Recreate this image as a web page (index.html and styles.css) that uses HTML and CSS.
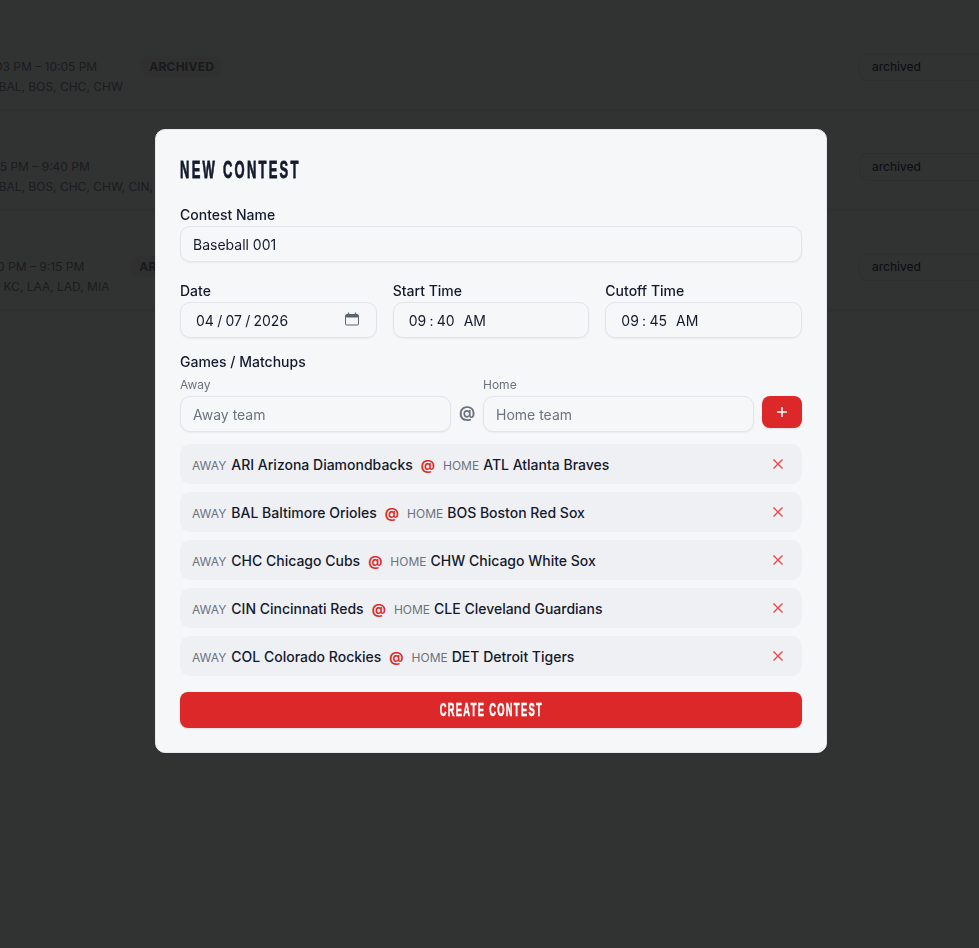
FILE: index.html
```html
<!DOCTYPE html>
<html lang="en">
<head>
<meta charset="utf-8">
<title>New Contest</title>
<link rel="stylesheet" href="styles.css">
</head>
<body>
<main class="page">
  <section class="row">
    <div class="row-info">
      <div class="row-top"><span class="time">10:03 PM – 10:05 PM</span><span class="badge">ARCHIVED</span></div>
      <div class="teams">ATL, BAL, BOS, CHC, CHW</div>
    </div>
    <div class="status">archived</div>
  </section>
  <section class="row">
    <div class="row-info">
      <div class="row-top row-top-wide"><span class="time">10:15 PM – 9:40 PM</span><span class="badge">ARCHIVED</span></div>
      <div class="teams">ATL, BAL, BOS, CHC, CHW, CIN, CLE, COL</div>
    </div>
    <div class="status">archived</div>
  </section>
  <section class="row">
    <div class="row-info">
      <div class="row-top row-top-mid"><span class="time">11:10 PM – 9:15 PM</span><span class="badge">ARCHIVED</span></div>
      <div class="teams">HOU, KC, LAA, LAD, MIA</div>
    </div>
    <div class="status">archived</div>
  </section>
</main>

<div class="backdrop">
  <form class="modal">
    <h2 class="modal-title"><span class="squeeze">NEW CONTEST</span></h2>

    <label class="field">
      <span class="label">Contest Name</span>
      <input class="input" type="text" value="Baseball 001">
    </label>

    <div class="time-grid">
      <label class="field">
        <span class="label">Date</span>
        <span class="date-wrap">
          <input class="input input-dt" type="date" value="2026-04-07">
          <svg class="cal" width="14" height="14" viewBox="0 0 14 14"><path d="M1.5 2.5h11a1 1 0 0 1 1 1v8.500a1 1 0 0 1-1 1h-11a1 1 0 0 1-1-1v-8.500a1 1 0 0 1 1-1z" fill="none" stroke="#5b6270" stroke-width="1"/><path d="M1 2.500h12v3h-12z" fill="#5b6270"/><path d="M3.500 0.500v2M10.500 0.500v2" stroke="#5b6270" stroke-width="1.200"/></svg>
        </span>
      </label>
      <label class="field">
        <span class="label">Start Time</span>
        <input class="input input-dt" type="time" value="09:40">
      </label>
      <label class="field">
        <span class="label">Cutoff Time</span>
        <input class="input input-dt" type="time" value="09:45">
      </label>
    </div>

    <div class="games">
      <div class="label">Games / Matchups</div>
      <div class="add-row">
        <label class="team-field">
          <span class="sublabel">Away</span>
          <input class="input" type="text" placeholder="Away team">
        </label>
        <span class="at-gray">@</span>
        <label class="team-field">
          <span class="sublabel">Home</span>
          <input class="input" type="text" placeholder="Home team">
        </label>
        <button class="add-btn" type="button" aria-label="Add game">
          <svg width="12" height="12" viewBox="0 0 12 12"><path d="M6 1v10M1 6h10" stroke="#fff" stroke-width="1.5" fill="none"/></svg>
        </button>
      </div>
    </div>

    <ul class="game-list">
      <li class="game">
        <span class="tag">AWAY</span><span class="team">ARI Arizona Diamondbacks</span><span class="at">@</span><span class="tag">HOME</span><span class="team">ATL Atlanta Braves</span>
        <svg class="remove" width="12" height="12" viewBox="0 0 12 12"><path d="M1.5 1.5l9 9M10.500 1.500l-9 9"/></svg>
      </li>
      <li class="game">
        <span class="tag">AWAY</span><span class="team">BAL Baltimore Orioles</span><span class="at">@</span><span class="tag">HOME</span><span class="team">BOS Boston Red Sox</span>
        <svg class="remove" width="12" height="12" viewBox="0 0 12 12"><path d="M1.5 1.5l9 9M10.500 1.500l-9 9"/></svg>
      </li>
      <li class="game">
        <span class="tag">AWAY</span><span class="team">CHC Chicago Cubs</span><span class="at">@</span><span class="tag">HOME</span><span class="team">CHW Chicago White Sox</span>
        <svg class="remove" width="12" height="12" viewBox="0 0 12 12"><path d="M1.5 1.5l9 9M10.500 1.500l-9 9"/></svg>
      </li>
      <li class="game">
        <span class="tag">AWAY</span><span class="team">CIN Cincinnati Reds</span><span class="at">@</span><span class="tag">HOME</span><span class="team">CLE Cleveland Guardians</span>
        <svg class="remove" width="12" height="12" viewBox="0 0 12 12"><path d="M1.5 1.5l9 9M10.500 1.500l-9 9"/></svg>
      </li>
      <li class="game">
        <span class="tag">AWAY</span><span class="team">COL Colorado Rockies</span><span class="at">@</span><span class="tag">HOME</span><span class="team">DET Detroit Tigers</span>
        <svg class="remove" width="12" height="12" viewBox="0 0 12 12"><path d="M1.5 1.5l9 9M10.500 1.500l-9 9"/></svg>
      </li>
    </ul>

    <button class="submit" type="button"><span class="squeeze squeeze-btn">CREATE CONTEST</span></button>
  </form>
</div>
</body>
</html>
```

FILE: styles.css
```css
* { box-sizing: border-box; }

html, body {
  margin: 0;
  height: 100%;
  overflow: hidden;
}

body {
  background: #f6f7f9;
  color: #141a2e;
  font-family: Inter, "Liberation Sans", sans-serif;
}

.page {
  width: 1100px;
  margin-left: -30px;
  padding-top: 10px;
}

.row {
  display: flex;
  justify-content: space-between;
  height: 100px;
  padding-top: 46px;
  border-bottom: 1px solid #e8eaee;
  box-shadow: 0 1px 2px rgba(0, 0, 0, 0.03);
  font-size: 12px;
}

.row-info { min-width: 0; }

.row-top {
  display: flex;
  align-items: center;
  gap: 43px;
  height: 20px;
  padding-left: 9px;
}

.row-top-mid { gap: 46px; }

.row-top-wide { gap: 80px; }

.time { color: #8a8f99; }

.badge {
  padding: 3px 9px;
  border-radius: 10px;
  background: #eff0f4;
  color: #7b8088;
  font-size: 12px;
  font-weight: 700;
  letter-spacing: 0.25px;
}

.teams {
  margin-top: 1px;
  line-height: 20px;
  color: #8a8f99;
}

.status {
  flex: none;
  width: 160px;
  height: 28px;
  margin-top: -3px;
  margin-right: 51px;
  padding: 0 12px;
  border: 1px solid #e2e4e9;
  border-radius: 9px;
  line-height: 26px;
  font-size: 12px;
  color: #3b4150;
}

.backdrop {
  position: fixed;
  inset: 0;
  display: flex;
  justify-content: center;
  align-items: flex-start;
  padding: 129px 0 0 3px;
  background: rgba(0, 0, 0, 0.8);
}

.modal {
  width: 672px;
  padding: 24px;
  border: 1px solid #e7e9ee;
  border-radius: 10px;
  background: #f6f7f9;
  box-shadow: 0 1px 3px rgba(0, 0, 0, 0.1);
}

.modal-title {
  height: 32px;
  margin: 0 0 19px;
  font-size: 24px;
  line-height: 32px;
  font-weight: 700;
  color: #141a2e;
}

.squeeze {
  display: inline-block;
  font-family: "Liberation Sans", sans-serif;
  font-weight: 700;
  letter-spacing: 4.2px;
  white-space: nowrap;
  transform: scaleX(0.54);
  transform-origin: left center;
  -webkit-text-stroke: 0.8px currentColor;
}

.squeeze-btn {
  font-size: 18px;
  letter-spacing: 2.5px;
  transform: scaleX(0.52);
  transform-origin: center;
  -webkit-text-stroke: 0.5px currentColor;
}

.field {
  display: flex;
  flex-direction: column;
  margin-bottom: 19px;
  min-width: 0;
}

.label {
  display: block;
  margin-bottom: 1px;
  font-size: 14px;
  line-height: 20px;
  font-weight: 500;
  color: #141a2e;
}

.input {
  width: 100%;
  height: 36px;
  padding: 0 12px;
  border: 1px solid #e2e4e9;
  border-radius: 10px;
  background: #f6f7f9;
  color: #141a2e;
  font-family: Inter, "Liberation Sans", sans-serif;
  font-size: 14px;
  box-shadow: 0 1px 2px rgba(0, 0, 0, 0.05);
}

.input::placeholder { color: #6b7280; }

.input-dt { padding-left: 14px; }

.input-dt::-webkit-calendar-picker-indicator { display: none; }

.input-dt::-webkit-datetime-edit-text { padding: 0 2.25px; }

.date-wrap {
  position: relative;
  display: block;
}

.cal {
  position: absolute;
  top: 10px;
  right: 18px;
}

.time-grid {
  display: grid;
  grid-template-columns: repeat(3, 1fr);
  gap: 16px;
}

.time-grid .field { margin-bottom: 0; }

.games { margin-top: 14px; }

.add-row {
  display: flex;
  align-items: flex-start;
  gap: 8px;
  margin-top: 5px;
}

.team-field {
  flex: 1;
  min-width: 0;
  display: flex;
  flex-direction: column;
}

.sublabel {
  margin-bottom: 3px;
  font-size: 12px;
  line-height: 16px;
  color: #6b7280;
}

.at-gray {
  flex: none;
  width: 16px;
  margin-top: 23px;
  font-size: 16px;
  line-height: 24px;
  font-weight: 700;
  color: #6b7280;
}

.add-btn {
  flex: none;
  display: flex;
  align-items: center;
  justify-content: center;
  width: 40px;
  height: 32px;
  margin-top: 19px;
  padding: 0;
  border: 0;
  border-radius: 8px;
  background: #dc2828;
  box-shadow: 0 1px 2px rgba(0, 0, 0, 0.1);
}

.game-list {
  display: flex;
  flex-direction: column;
  gap: 8px;
  margin: 12px 0 16px;
  padding: 0;
  list-style: none;
}

.game {
  display: flex;
  align-items: baseline;
  height: 40px;
  padding: 11px 12px 9px;
  border-radius: 10px;
  background: #eff0f4;
  font-size: 14px;
  line-height: 20px;
}

.tag {
  margin-right: 5px;
  font-size: 12px;
  color: #6b7280;
}

.at + .tag { margin-right: 4px; }

.team {
  font-weight: 500;
  color: #141a2e;
}

.at {
  margin: 0 8px;
  font-weight: 700;
  color: #dc2828;
}

.remove {
  align-self: center;
  margin-left: auto;
  margin-right: 6px;
  margin-bottom: 2px;
  fill: none;
  stroke: #ef4444;
  stroke-width: 1.4;
}

.submit {
  display: block;
  width: 100%;
  height: 36px;
  border: 0;
  border-radius: 8px;
  background: #dc2828;
  color: #fff;
  box-shadow: 0 1px 2px rgba(0, 0, 0, 0.1);
}
```
